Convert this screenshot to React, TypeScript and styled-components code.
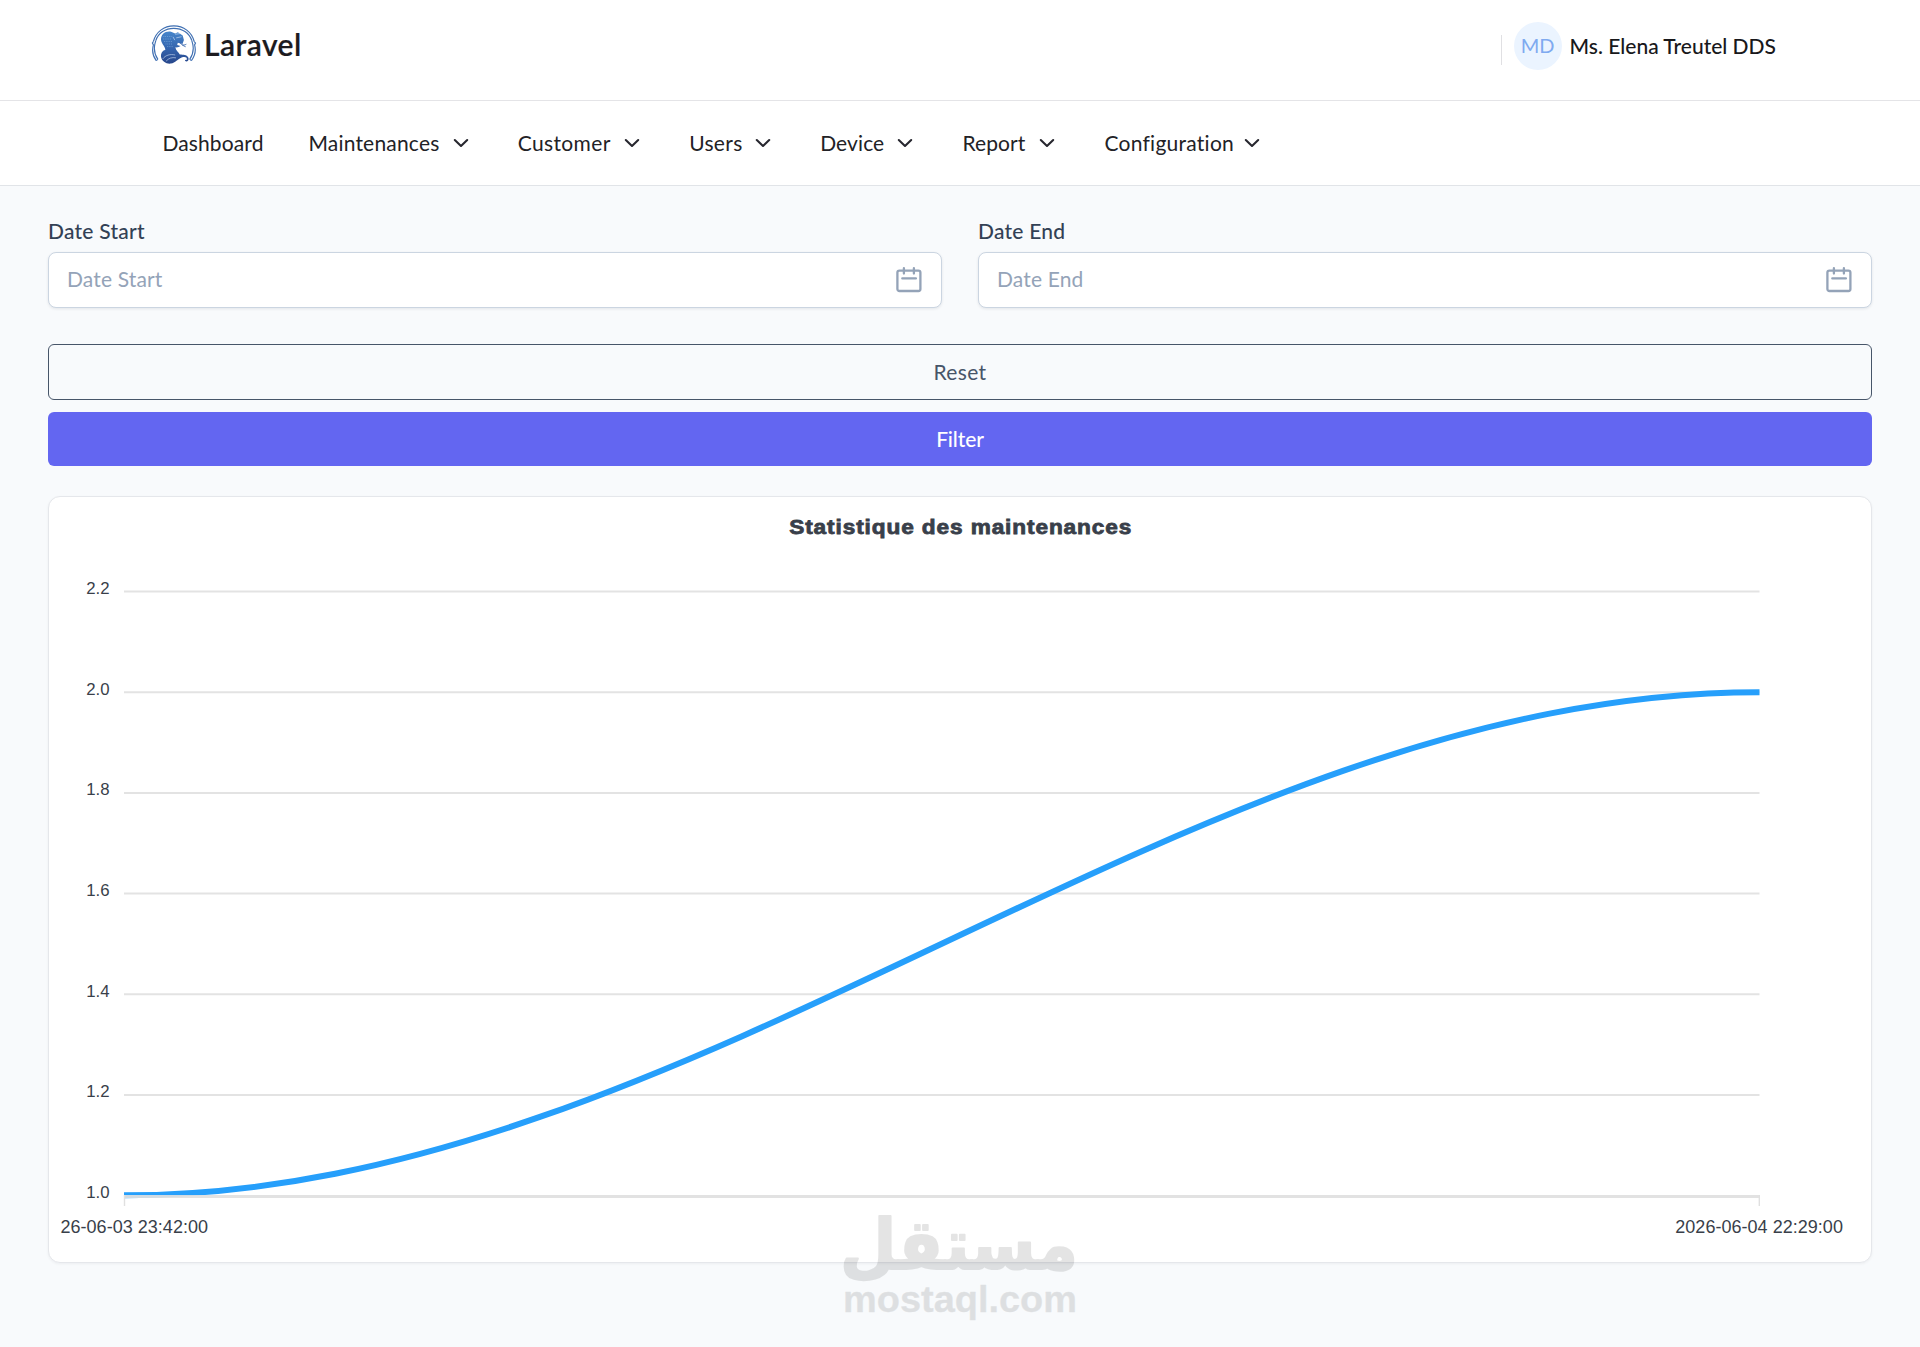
import React from 'react';
import styled, { createGlobalStyle } from 'styled-components';

const GlobalStyle = createGlobalStyle`
  *, *::before, *::after { box-sizing: border-box; }
  body {
    margin: 0;
    background: #f8fafc;
    font-family: Lato, "Open Sans", sans-serif;
    font-size: 21px;
    line-height: 28px;
    color: #1f1f23;
  }
`;

const Page = styled.div`
  position: relative;
  min-height: 1347px;
  background: #f8fafc;
`;

const Header = styled.header`
  display: flex;
  justify-content: space-between;
  align-items: flex-start;
  height: 101px;
  padding: 22px 144px 0 151px;
  background: #fff;
  border-bottom: 1px solid #e4e4e7;
`;

const Brand = styled.a`
  display: flex;
  align-items: flex-start;
  gap: 7px;
  padding-top: 2px;
`;

const BrandName = styled.span`
  padding-top: 5px;
  font-size: 30px;
  font-weight: 600;
  line-height: 30px;
  letter-spacing: 0.45px;
  color: #1c1b1f;
  -webkit-text-stroke: 0.2px #1c1b1f;
`;

const Account = styled.div`
  display: flex;
  align-items: center;
`;

const Divider = styled.span`
  width: 1px;
  height: 30px;
  margin: 8px 12px 0 0;
  background: #e0e0e3;
`;

const Avatar = styled.span`
  display: flex;
  align-items: center;
  justify-content: center;
  width: 48px;
  height: 48px;
  padding-bottom: 3px;
  border-radius: 50%;
  background: #ebf4ff;
  color: #7faaf0;
  font-size: 20px;
`;

const AccountName = styled.span`
  margin-left: 8px;
  font-weight: 500;
  letter-spacing: 0;
  color: #18181b;
`;

const Nav = styled.nav`
  display: grid;
  grid-template-columns: 146px 209.3px 171.5px 131px 142.3px 142px 204.5px;
  align-items: center;
  height: 85px;
  padding: 0 0 1px 162.4px;
  background: #fff;
  border-bottom: 1px solid #e1e4e8;
`;

const NavItem = styled.a<{ $spacing: number }>`
  display: flex;
  align-items: center;
  justify-content: space-between;
  padding-right: 45px;
  letter-spacing: ${(p) => p.$spacing}px;
  color: #222226;
  white-space: nowrap;

  svg { flex: none; margin-top: 1px; }
`;

const Main = styled.main`
  display: flex;
  flex-direction: column;
  padding: 31px 48px 0;
`;

const Filters = styled.div`
  display: grid;
  grid-template-columns: 1fr 1fr;
  gap: 36px;
`;

const Field = styled.label`
  display: flex;
  flex-direction: column;
  gap: 7px;
`;

const FieldLabel = styled.span`
  font-weight: 500;
  letter-spacing: 0.25px;
  color: #334155;
`;

const InputBox = styled.span`
  display: flex;
  align-items: center;
  height: 56px;
  padding: 0 18px;
  border: 1px solid #cbd5e1;
  border-radius: 8px;
  background: #fff;
  box-shadow: 0 1px 3px rgba(15, 23, 42, 0.09);
`;

const Input = styled.input`
  flex: 1;
  height: 54px;
  padding: 0 0 3px;
  border: 0;
  outline: 0;
  background: transparent;
  font: inherit;
  letter-spacing: 0.15px;
  color: #334155;

  &::placeholder { color: #94a3b8; opacity: 1; }
`;

const Actions = styled.div`
  display: flex;
  flex-direction: column;
  gap: 12px;
  margin: 36px 0 30px;
`;

const Button = styled.button<{ $primary?: boolean }>`
  height: ${(p) => (p.$primary ? 54 : 56)}px;
  padding: 0 0 1px;
  border: ${(p) => (p.$primary ? '0' : '1px solid #475569')};
  border-radius: 6px;
  background: ${(p) => (p.$primary ? '#6366f1' : 'transparent')};
  color: ${(p) => (p.$primary ? '#fff' : '#475569')};
  font: inherit;
  font-weight: ${(p) => (p.$primary ? 500 : 400)};
  letter-spacing: ${(p) => (p.$primary ? -0.1 : 0.33)}px;
`;

const Card = styled.section`
  height: 767px;
  border: 1px solid #e5e7eb;
  border-radius: 12px;
  background: #fff;
  box-shadow: 0 1px 3px rgba(15, 23, 42, 0.05);
  overflow: hidden;
`;

const ChartSvg = styled.svg`
  display: block;
  font-family: "Liberation Sans", Arial, sans-serif;
  fill: #393f4a;
`;

const Watermark = styled.svg`
  position: absolute;
  left: 820px;
  top: 1180px;
  fill: #000;
  stroke: #000;
  opacity: 0.1;
  overflow: visible;
  pointer-events: none;
`;

const ticks = ['2.2', '2.0', '1.8', '1.6', '1.4', '1.2', '1.0'];

const navItems = [
  { label: 'Dashboard', spacing: 0.12, menu: false },
  { label: 'Maintenances', spacing: 0.2, menu: true },
  { label: 'Customer', spacing: 0.37, menu: true },
  { label: 'Users', spacing: 0.32, menu: true },
  { label: 'Device', spacing: 0.1, menu: true },
  { label: 'Report', spacing: 0.1, menu: true },
  { label: 'Configuration', spacing: 0.25, menu: true },
];

const Chevron = () => (
  <svg width="24" height="24" viewBox="0 0 24 24" fill="none" stroke="#27272f" strokeWidth="2.1" strokeLinecap="round" strokeLinejoin="round">
    <path d="M5.8 9l6.2 6 6.2-6" />
  </svg>
);

const CalendarIcon = () => (
  <svg width="28" height="28" viewBox="0 0 28 28" fill="none" stroke="#94a3b8" strokeWidth="2.3" strokeLinecap="round" strokeLinejoin="round">
    <rect x="2.4" y="4.6" width="23" height="20.4" rx="2" />
    <path d="M8.9 2.2v5.4M18.9 2.2v5.4M7.3 12.4h13.6" />
  </svg>
);

const SerpentLogo = () => (
  <svg width="46" height="42" viewBox="0 0 46 42" fill="none">
    <defs>
      <linearGradient id="serpent" x1="0" y1="0" x2="0" y2="1">
        <stop offset="0" stopColor="#4585cb" />
        <stop offset="0.55" stopColor="#3463ac" />
        <stop offset="1" stopColor="#27468b" />
      </linearGradient>
    </defs>
    <g stroke="#3f6fb2" strokeWidth="1.15">
      <path d="M2.4 17.5C4.8 8 13 1.9 22.8 1.9S40.8 8 43.2 17.5" />
      <path d="M4.8 16.6C7.4 9 14.4 4.3 22.8 4.3S38.2 9 40.8 16.6" />
      <path d="M2.4 17.5l-1 1.6 1 1.8C.9 26 1.6 31.6 5.2 36.6M4.8 16.6l-.9 3.2c-1.3 5.6-.4 10.6 3 15.6" />
      <path d="M43.2 17.5l1.3 1.6-.9 1.8C45 26 44.2 31.6 40.4 36.6M40.8 16.6l.9 3.2c1.3 5.6.4 10.6-3 15.6" />
      <path d="M5.2 36.6l1.7-1.2M40.4 36.6l-1.7-1.2" />
    </g>
    <path
      fill="url(#serpent)"
      d="M20 7.7C14 6.8 9.8 10.6 10 15.6c.2 4 3.8 6.4 4.4 10.2-3.4 1-4.8 3.7-4.4 7 .8 4.7 5.3 7.3 9.8 6.8 4.8-.5 6.8-4.6 10.8-6 3.2-1.1 5.6-.3 5.2 1.6-.3 1.3-1.6 1-1.8.3-.4 1 .4 2 1.6 1.9 1.8-.2 2.6-2.4 1.6-4.2-1.4-2.5-5-2.5-8.4-2.7-1.2-2.3-4-4-4.4-7.2 2.2.4 3.6-.5 5.2-1.3l-3.4-1 .6-2.2 4.7 1.2 1.4-4-1.2-4.6-4.8-3.2-2.7 1.2z"
    />
    <g stroke="#d5e4f6" strokeWidth="0.6" strokeLinecap="round">
      <path d="M24.6 10.2l4.3-.6M25.6 13.8l4.6-1M22.2 13.2l1.4 2.6M12 34.6c2.4-3.4 7-4.8 11.8-3.7M15.4 36.8c2.3-2.7 5.6-3.7 9.2-3" />
    </g>
    <g stroke="#8fb8e6" strokeWidth="0.6" strokeDasharray="0.8 1">
      <path d="M12.5 12.5h9M12 15h9M13 17.5h8M14.6 20h7M16 22.6h6" />
    </g>
    <path stroke="#3a68ad" strokeWidth="0.9" strokeLinecap="round" d="M28.8 18.6c1.4 2.3 3.6 3.1 6.2 1.8M31.5 21.2l2.8 1.4" />
  </svg>
);

const MaintenanceChart = () => (
  <ChartSvg width="1822" height="765" viewBox="49 497 1822 765">
    <text
      x="789.2"
      y="533.5"
      fontSize="20"
      fontWeight="700"
      letterSpacing="0.8"
      textLength="343"
      lengthAdjust="spacingAndGlyphs"
      stroke="#393f4a"
      strokeWidth="0.8"
    >
      Statistique des maintenances
    </text>
    {ticks.map((tick, i) => (
      <g key={tick}>
        {i < 6 && <path d={`M124 ${591.5 + i * 100.7}H1759.5`} stroke="#e3e3e3" strokeWidth="2" />}
        <text x="109.5" y={594.1 + i * 100.6} fontSize="16.8" textAnchor="end">{tick}</text>
      </g>
    ))}
    <path d="M124 1195.3C696.6 1195.3 1186.9 692.3 1759.5 692.3" fill="none" stroke="#269ffb" strokeWidth="6" />
    <path d="M124 1196.5H1760" stroke="#e0e0e0" strokeWidth="3" strokeOpacity="0.92" />
    <path d="M124.5 1195v11M1759.3 1195v11" stroke="#e0e0e0" strokeWidth="1.4" />
    <text x="60.5" y="1232.6" fontSize="18" textLength="147.5">26-06-03 23:42:00</text>
    <text x="1675.3" y="1232.6" fontSize="18" textLength="167.6">2026-06-04 22:29:00</text>
  </ChartSvg>
);

export default function App() {
  return (
    <Page>
      <GlobalStyle />
      <Header>
        <Brand>
          <SerpentLogo />
          <BrandName>Laravel</BrandName>
        </Brand>
        <Account>
          <Divider />
          <Avatar>MD</Avatar>
          <AccountName>Ms. Elena Treutel DDS</AccountName>
        </Account>
      </Header>
      <Nav>
        {navItems.map((item) => (
          <NavItem key={item.label} $spacing={item.spacing}>
            {item.label}
            {item.menu && <Chevron />}
          </NavItem>
        ))}
      </Nav>
      <Main>
        <Filters>
          {['Date Start', 'Date End'].map((name) => (
            <Field key={name}>
              <FieldLabel>{name}</FieldLabel>
              <InputBox>
                <Input placeholder={name} />
                <CalendarIcon />
              </InputBox>
            </Field>
          ))}
        </Filters>
        <Actions>
          <Button>Reset</Button>
          <Button $primary>Filter</Button>
        </Actions>
        <Card>
          <MaintenanceChart />
        </Card>
      </Main>
      <Watermark width="280" height="160" viewBox="820 1180 280 160">
        <text
          x="1078"
          y="1269"
          direction="rtl"
          fontFamily='"DejaVu Sans", sans-serif'
          fontWeight="700"
          fontSize="70"
          textLength="238"
          lengthAdjust="spacingAndGlyphs"
          strokeWidth="2"
          strokeLinejoin="round"
        >
          مستقل
        </text>
        <text
          x="843"
          y="1312"
          fontFamily='"Liberation Sans", Arial, sans-serif'
          fontWeight="700"
          fontSize="37"
          textLength="234"
          lengthAdjust="spacingAndGlyphs"
          strokeWidth="0.4"
          strokeLinejoin="round"
        >
          mostaql.com
        </text>
      </Watermark>
    </Page>
  );
}
